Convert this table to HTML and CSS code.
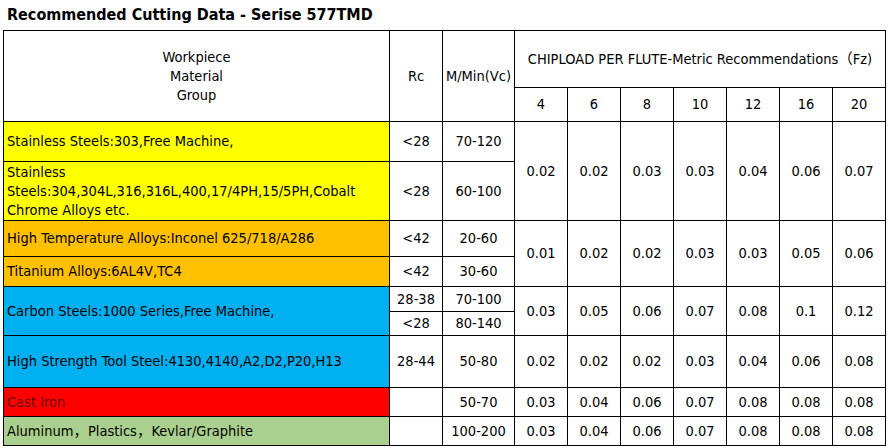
FILE: index.html
```html
<!DOCTYPE html>
<html>
<head>
<meta charset="utf-8">
<link rel="stylesheet" href="styles.css">
</head>
<body>
<div class="title">Recommended Cutting Data - Serise 577TMD</div>
<table class="data">
  <colgroup>
    <col class="c-mat"><col class="c-rc"><col class="c-vc">
    <col class="c-d"><col class="c-d"><col class="c-d"><col class="c-d"><col class="c-d"><col class="c-d"><col class="c-d">
  </colgroup>
  <tr class="h-a">
    <td rowspan="2" class="hdr">Workpiece<br>Material<br>Group</td>
    <td rowspan="2" class="hdr">Rc</td>
    <td rowspan="2" class="hdr">M/Min(Vc)</td>
    <td colspan="7" class="hdr">CHIPLOAD PER FLUTE-Metric Recommendations（Fz)</td>
  </tr>
  <tr class="h-b">
    <td>4</td><td>6</td><td>8</td><td>10</td><td>12</td><td>16</td><td>20</td>
  </tr>
  <tr class="r1">
    <td class="mat yellow">Stainless Steels:303,Free Machine,</td>
    <td>&lt;28</td><td>70-120</td>
    <td rowspan="2">0.02</td><td rowspan="2">0.02</td><td rowspan="2">0.03</td><td rowspan="2">0.03</td><td rowspan="2">0.04</td><td rowspan="2">0.06</td><td rowspan="2">0.07</td>
  </tr>
  <tr class="r2">
    <td class="mat yellow">Stainless<br>Steels:304,304L,316,316L,400,17/4PH,15/5PH,Cobalt<br>Chrome Alloys etc.</td>
    <td>&lt;28</td><td>60-100</td>
  </tr>
  <tr class="r3">
    <td class="mat orange">High Temperature Alloys:Inconel 625/718/A286</td>
    <td>&lt;42</td><td>20-60</td>
    <td rowspan="2">0.01</td><td rowspan="2">0.02</td><td rowspan="2">0.02</td><td rowspan="2">0.03</td><td rowspan="2">0.03</td><td rowspan="2">0.05</td><td rowspan="2">0.06</td>
  </tr>
  <tr class="r4">
    <td class="mat orange">Titanium Alloys:6AL4V,TC4</td>
    <td>&lt;42</td><td>30-60</td>
  </tr>
  <tr class="r5a">
    <td rowspan="2" class="mat blue">Carbon Steels:1000 Series,Free Machine,</td>
    <td>28-38</td><td>70-100</td>
    <td rowspan="2">0.03</td><td rowspan="2">0.05</td><td rowspan="2">0.06</td><td rowspan="2">0.07</td><td rowspan="2">0.08</td><td rowspan="2">0.1</td><td rowspan="2">0.12</td>
  </tr>
  <tr class="r5b">
    <td>&lt;28</td><td>80-140</td>
  </tr>
  <tr class="r6">
    <td class="mat blue">High Strength Tool Steel:4130,4140,A2,D2,P20,H13</td>
    <td>28-44</td><td>50-80</td>
    <td>0.02</td><td>0.02</td><td>0.02</td><td>0.03</td><td>0.04</td><td>0.06</td><td>0.08</td>
  </tr>
  <tr class="r7">
    <td class="mat red">Cast Iron</td>
    <td></td><td>50-70</td>
    <td>0.03</td><td>0.04</td><td>0.06</td><td>0.07</td><td>0.08</td><td>0.08</td><td>0.08</td>
  </tr>
  <tr class="r8">
    <td class="mat green">Aluminum，Plastics，Kevlar/Graphite</td>
    <td></td><td>100-200</td>
    <td>0.03</td><td>0.04</td><td>0.06</td><td>0.07</td><td>0.08</td><td>0.08</td><td>0.08</td>
  </tr>
</table>
</body>
</html>
```

FILE: styles.css
```css
html, body {
  margin: 0;
  padding: 0;
  background: #ffffff;
}
body {
  font-family: "DejaVu Sans Condensed", "DejaVu Sans", "Noto Sans CJK SC", sans-serif;
  font-stretch: condensed;
  color: #000000;
}
.title {
  height: 30px;
  box-sizing: border-box;
  padding: 5px 0 0 7px;
  font-size: 16px;
  font-weight: bold;
  line-height: 20px;
  color: #000000;
}
.data {
  margin-left: 3px;
  border-collapse: collapse;
  table-layout: fixed;
  width: 883px;
  font-size: 14.5px;
  line-height: 19px;
}
.c-mat { width: 386px; }
.c-rc { width: 53px; }
.c-vc { width: 72px; }
.c-d { width: 53px; }
.data td {
  border: 1px solid #000000;
  padding: 0;
  text-align: center;
  vertical-align: middle;
  white-space: nowrap;
}
.data td.mat {
  text-align: left;
  padding-left: 3px;
}
.h-a { height: 57px; }
.h-b { height: 34px; }
.r1 { height: 40px; }
.r2 { height: 59px; }
.r3 { height: 36px; }
.r4 { height: 30px; }
.r5a { height: 25px; }
.r5b { height: 24px; }
.r6 { height: 52px; }
.r7 { height: 29px; }
.r8 { height: 29px; }
.yellow { background: #ffff00; }
.orange { background: #ffc000; }
.blue { background: #00b0f0; }
.red { background: #ff0000; color: #6e0000; }
.green { background: #a9d08e; }
```
